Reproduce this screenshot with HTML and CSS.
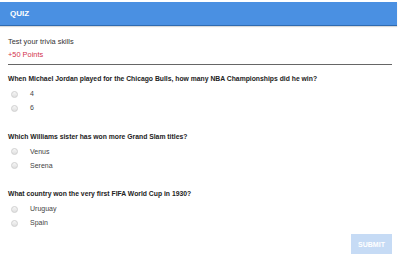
FILE: index.html
```html
<!DOCTYPE html>
<html lang="en">
<head>
    <meta charset="UTF-8">
    <title>Quiz</title>
    <link rel="stylesheet" href="styles.css">
</head>
<body>
    <div class="header">QUIZ</div>
    <div class="content">
        <div class="intro">
            <div class="subtitle">Test your trivia skills</div>
            <div class="points">+50 Points</div>
        </div>

        <div class="question">
            <div class="q-title">When Michael Jordan played for the Chicago Bulls, how many NBA Championships did he win?</div>
            <label class="option"><span class="radio"></span>4</label>
            <label class="option"><span class="radio"></span>6</label>
        </div>

        <div class="question">
            <div class="q-title">Which Williams sister has won more Grand Slam titles?</div>
            <label class="option"><span class="radio"></span>Venus</label>
            <label class="option"><span class="radio"></span>Serena</label>
        </div>

        <div class="question">
            <div class="q-title">What country won the very first FIFA World Cup in 1930?</div>
            <label class="option"><span class="radio"></span>Uruguay</label>
            <label class="option"><span class="radio"></span>Spain</label>
        </div>

        <div class="actions">
            <button class="submit" disabled>SUBMIT</button>
        </div>
    </div>
</body>
</html>
```

FILE: styles.css
```css
body {
    margin: 0;
    font-family: "Liberation Sans", Arial, sans-serif;
    font-size: 6.8px;
    color: #333;
    background: #fff;
}

.header {
    margin-top: 2px;
    width: 387px;
    height: 23px;
    line-height: 23px;
    padding-left: 10px;
    background: #4a90e2;
    border-bottom: 1px solid #2f6bb0;
    box-shadow: 0 1px 1px rgba(0, 0, 0, 0.15);
    color: #fff;
    font-weight: bold;
    font-size: 8px;
}

.content {
    padding: 0 8px;
}

.intro {
    padding-top: 9px;
    padding-bottom: 3px;
    border-bottom: 1px solid #666;
    margin-bottom: 7px;
    font-size: 7.4px;
}

.subtitle {
    line-height: 13px;
}

.points {
    line-height: 13px;
    color: #d3324c;
}

.question + .question {
    margin-top: 14.5px;
}

.q-title {
    font-weight: bold;
    color: #222;
    line-height: 14px;
    margin-bottom: 1px;
}

.option {
    display: flex;
    align-items: center;
    line-height: 14px;
    color: #444;
    font-size: 7px;
}

.radio {
    width: 5px;
    height: 5px;
    border-radius: 50%;
    border: 1px solid #d0d0d0;
    background: linear-gradient(#f6f6f6, #e0e0e0);
    margin-left: 3px;
    margin-right: 12px;
}

.actions {
    display: flex;
    justify-content: flex-end;
    margin-top: 4px;
}

.submit {
    width: 41px;
    height: 20px;
    border: none;
    background: #c6dbf5;
    color: #fff;
    font-family: "Liberation Sans", Arial, sans-serif;
    font-size: 7px;
    font-weight: bold;
    padding: 0;
}
```
